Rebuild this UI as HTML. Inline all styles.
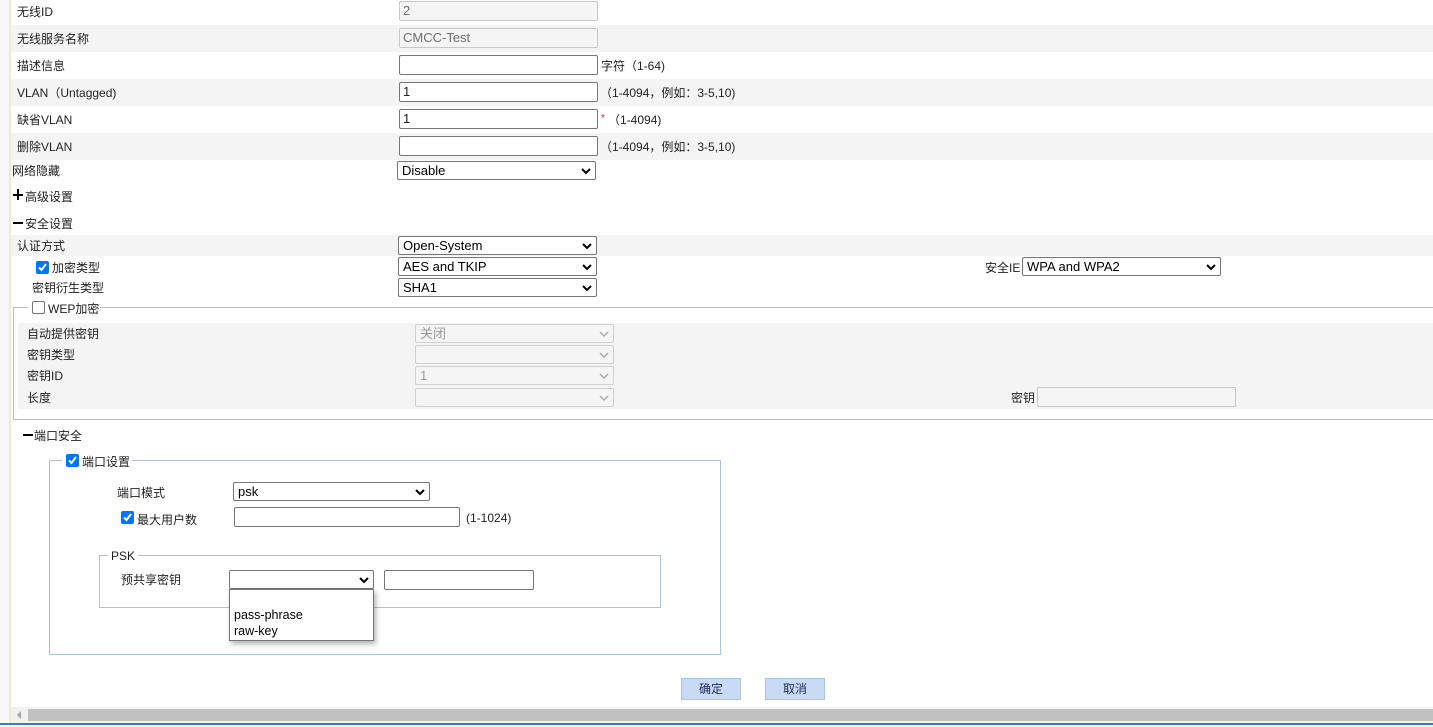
<!DOCTYPE html>
<html><head><meta charset="utf-8"><style>
*{box-sizing:border-box;margin:0;padding:0}
body{width:1433px;height:727px;position:relative;overflow:hidden;background:#fff;font-family:"Liberation Sans","Noto Sans CJK SC",sans-serif;font-size:12px;color:#222}
.a{position:absolute;white-space:nowrap}
.g{position:absolute;background:#f4f4f4}
.t{position:absolute;line-height:14px;white-space:nowrap}
.in{position:absolute;border:1px solid #767676;border-radius:2px;background:#fff;height:20px;font-size:13px;padding-left:3px;line-height:18px}
.dis{background:#f5f5f5;border-color:#c8c8c8;color:#6d6d6d}
.sel{position:absolute;border:1px solid #767676;border-radius:2px;background:#fff;height:19px;font-size:13px;padding-left:4px;line-height:17px;color:#000}
.sel svg{position:absolute;right:4px;top:6px}
.sd{border-color:#d0d0d0;background:#f5f5f5;color:#9a9a9a}
.cb{position:absolute;width:13px;height:13px;border-radius:2px;background:#0075ff}
.cb svg{position:absolute;left:1px;top:1px}
.cbo{position:absolute;width:13px;height:13px;border-radius:2px;border:1px solid #767676;background:#fff}
.fs{position:absolute;border:1px solid #a9c1e6}
.btn{position:absolute;background:#c9daf5;border:1px solid #a9c4ea;width:60px;height:22px;text-align:center;line-height:20px;color:#1c2c5c}
</style></head><body>
<div class="a" style="left:0;top:0;width:9px;height:724px;background:#f8f8f8"></div>
<div class="a" style="left:9px;top:0;width:2px;height:724px;background:#efe9da"></div>

<div class="g" style="left:11px;top:25px;width:1422px;height:27px"></div>
<div class="g" style="left:11px;top:79px;width:1422px;height:27px"></div>
<div class="g" style="left:11px;top:133px;width:1422px;height:27px"></div>
<div class="g" style="left:11px;top:235px;width:1422px;height:21px"></div>

<div class="t" style="left:17px;top:5px">无线ID</div>
<div class="in dis" style="left:399px;top:1px;width:199px">2</div>
<div class="t" style="left:17px;top:32px">无线服务名称</div>
<div class="in dis" style="left:399px;top:28px;width:199px">CMCC-Test</div>
<div class="t" style="left:17px;top:59px">描述信息</div>
<div class="in" style="left:399px;top:55px;width:199px"></div>
<div class="t" style="left:601px;top:59px">字符（1-64)</div>
<div class="t" style="left:17px;top:86px">VLAN（Untagged)</div>
<div class="in" style="left:399px;top:82px;width:199px">1</div>
<div class="t" style="left:600px;top:86px">（1-4094，例如：3-5,10)</div>
<div class="t" style="left:17px;top:113px">缺省VLAN</div>
<div class="in" style="left:399px;top:109px;width:199px">1</div>
<div class="t" style="left:601px;top:112px;color:#e02020;font-size:10px">*</div>
<div class="t" style="left:608px;top:113px">（1-4094)</div>
<div class="t" style="left:17px;top:140px">删除VLAN</div>
<div class="in" style="left:399px;top:136px;width:199px"></div>
<div class="t" style="left:600px;top:140px">（1-4094，例如：3-5,10)</div>

<div class="t" style="left:12px;top:164px">网络隐藏</div>
<div class="sel" style="left:397px;top:161px;width:199px">Disable<svg width="10" height="7"><path d="M1 1L5 5L9 1" stroke="#000" stroke-width="2" fill="none"/></svg></div>

<div class="a" style="left:13px;top:194px;width:10px;height:2px;background:#000"></div>
<div class="a" style="left:17px;top:189px;width:2px;height:11px;background:#000"></div>
<div class="t" style="left:25px;top:190px">高级设置</div>
<div class="a" style="left:13px;top:222px;width:10px;height:2px;background:#000"></div>
<div class="t" style="left:25px;top:217px">安全设置</div>

<div class="t" style="left:17px;top:239px">认证方式</div>
<div class="sel" style="left:398px;top:236px;width:199px">Open-System<svg width="10" height="7"><path d="M1 1L5 5L9 1" stroke="#000" stroke-width="2" fill="none"/></svg></div>
<div class="cb" style="left:36px;top:261px"><svg width="11" height="11"><path d="M2 5.5L4.5 8L9 2" stroke="#fff" stroke-width="2" fill="none"/></svg></div>
<div class="t" style="left:52px;top:261px">加密类型</div>
<div class="sel" style="left:398px;top:257px;width:199px">AES and TKIP<svg width="10" height="7"><path d="M1 1L5 5L9 1" stroke="#000" stroke-width="2" fill="none"/></svg></div>
<div class="t" style="left:985px;top:261px">安全IE</div>
<div class="sel" style="left:1022px;top:257px;width:199px">WPA and WPA2<svg width="10" height="7"><path d="M1 1L5 5L9 1" stroke="#000" stroke-width="2" fill="none"/></svg></div>
<div class="t" style="left:32px;top:281px">密钥衍生类型</div>
<div class="sel" style="left:398px;top:278px;width:199px">SHA1<svg width="10" height="7"><path d="M1 1L5 5L9 1" stroke="#000" stroke-width="2" fill="none"/></svg></div>

<div class="fs" style="left:13px;top:307px;width:1430px;height:113px"></div>
<div class="a" style="left:28px;top:300px;width:72px;height:14px;background:#fff"></div>
<div class="cbo" style="left:32px;top:301px"></div>
<div class="t" style="left:48px;top:302px">WEP加密</div>
<div class="g" style="left:18px;top:323px;width:1415px;height:86px"></div>
<div class="t" style="left:27px;top:327px">自动提供密钥</div>
<div class="sel sd" style="left:415px;top:324px;width:199px">关闭<svg width="10" height="7"><path d="M1 1L5 5L9 1" stroke="#aaa" stroke-width="1.5" fill="none"/></svg></div>
<div class="t" style="left:27px;top:348px">密钥类型</div>
<div class="sel sd" style="left:415px;top:345px;width:199px"><svg width="10" height="7"><path d="M1 1L5 5L9 1" stroke="#aaa" stroke-width="1.5" fill="none"/></svg></div>
<div class="t" style="left:27px;top:369px">密钥ID</div>
<div class="sel sd" style="left:415px;top:366px;width:199px">1<svg width="10" height="7"><path d="M1 1L5 5L9 1" stroke="#aaa" stroke-width="1.5" fill="none"/></svg></div>
<div class="t" style="left:27px;top:391px">长度</div>
<div class="sel sd" style="left:415px;top:388px;width:199px"><svg width="10" height="7"><path d="M1 1L5 5L9 1" stroke="#aaa" stroke-width="1.5" fill="none"/></svg></div>
<div class="t" style="left:1011px;top:391px">密钥</div>
<div class="in dis" style="left:1037px;top:387px;width:199px"></div>

<div class="a" style="left:23px;top:434px;width:10px;height:2px;background:#000"></div>
<div class="t" style="left:34px;top:429px">端口安全</div>

<div class="fs" style="left:49px;top:460px;width:672px;height:195px"></div>
<div class="a" style="left:62px;top:452px;width:70px;height:14px;background:#fff"></div>
<div class="cb" style="left:66px;top:454px"><svg width="11" height="11"><path d="M2 5.5L4.5 8L9 2" stroke="#fff" stroke-width="2" fill="none"/></svg></div>
<div class="t" style="left:82px;top:455px">端口设置</div>
<div class="t" style="left:117px;top:486px">端口模式</div>
<div class="sel" style="left:233px;top:482px;width:197px">psk<svg width="10" height="7"><path d="M1 1L5 5L9 1" stroke="#000" stroke-width="2" fill="none"/></svg></div>
<div class="cb" style="left:121px;top:511px"><svg width="11" height="11"><path d="M2 5.5L4.5 8L9 2" stroke="#fff" stroke-width="2" fill="none"/></svg></div>
<div class="t" style="left:137px;top:513px">最大用户数</div>
<div class="in" style="left:234px;top:507px;width:226px"></div>
<div class="t" style="left:466px;top:511px">(1-1024)</div>

<div class="fs" style="left:99px;top:555px;width:562px;height:53px"></div>
<div class="a" style="left:108px;top:548px;width:30px;height:14px;background:#fff"></div>
<div class="t" style="left:111px;top:549px">PSK</div>
<div class="t" style="left:121px;top:573px">预共享密钥</div>
<div class="sel" style="left:229px;top:570px;width:145px;height:19px"><svg width="10" height="7"><path d="M1 1L5 5L9 1" stroke="#000" stroke-width="2" fill="none"/></svg></div>
<div class="in" style="left:384px;top:570px;width:150px"></div>
<div class="a" style="left:229px;top:589px;width:145px;height:52px;background:#fff;border:1px solid #767676;box-shadow:2px 3px 5px rgba(0,0,0,.3)"></div>
<div class="t" style="left:234px;top:608px;font-size:12.5px;color:#000">pass-phrase</div>
<div class="t" style="left:234px;top:624px;font-size:12.5px;color:#000">raw-key</div>

<div class="btn" style="left:681px;top:678px">确定</div>
<div class="btn" style="left:765px;top:678px">取消</div>

<div class="a" style="left:11px;top:707px;width:1422px;height:16px;background:#f1f1f1"></div>
<div class="a" style="left:28px;top:709px;width:1405px;height:12px;background:#c0c0c0"></div>
<svg class="a" style="left:16px;top:711px" width="6" height="8"><path d="M5 0L1 4L5 8Z" fill="#a3a3a3"/></svg>
<div class="a" style="left:0;top:723px;width:1433px;height:2px;background:#2f7ed4"></div>
</body></html>
